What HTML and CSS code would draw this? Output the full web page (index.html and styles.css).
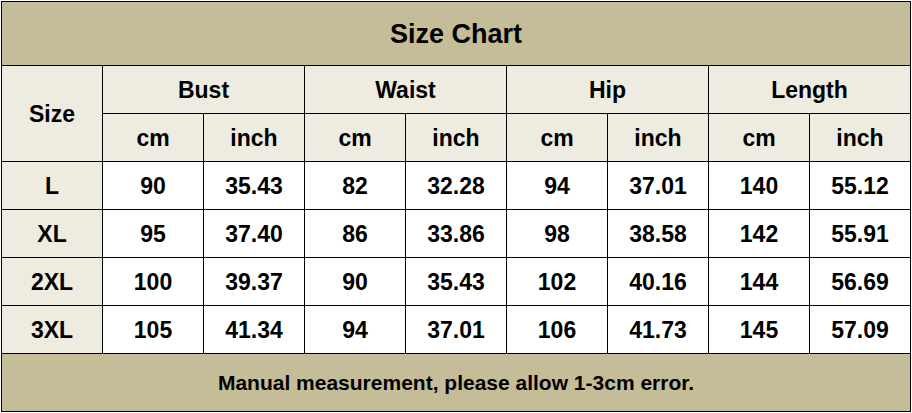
FILE: index.html
```html
<!DOCTYPE html>
<html>
<head>
<meta charset="utf-8">
<link rel="stylesheet" href="styles.css">
</head>
<body>
<table class="chart">
  <colgroup>
    <col class="c"><col class="c"><col class="c"><col class="c"><col class="c"><col class="c"><col class="c"><col class="c"><col class="c">
  </colgroup>
  <tr class="title-row"><td colspan="9" class="title">Size Chart</td></tr>
  <tr class="row"><td rowspan="2" class="head">Size</td><td colspan="2" class="head">Bust</td><td colspan="2" class="head">Waist</td><td colspan="2" class="head">Hip</td><td colspan="2" class="head">Length</td></tr>
  <tr class="row"><td class="head">cm</td><td class="head">inch</td><td class="head">cm</td><td class="head">inch</td><td class="head">cm</td><td class="head">inch</td><td class="head">cm</td><td class="head">inch</td></tr>
  <tr class="row"><td class="head">L</td><td>90</td><td>35.43</td><td>82</td><td>32.28</td><td>94</td><td>37.01</td><td>140</td><td>55.12</td></tr>
  <tr class="row"><td class="head">XL</td><td>95</td><td>37.40</td><td>86</td><td>33.86</td><td>98</td><td>38.58</td><td>142</td><td>55.91</td></tr>
  <tr class="row"><td class="head">2XL</td><td>100</td><td>39.37</td><td>90</td><td>35.43</td><td>102</td><td>40.16</td><td>144</td><td>56.69</td></tr>
  <tr class="row"><td class="head">3XL</td><td>105</td><td>41.34</td><td>94</td><td>37.01</td><td>106</td><td>41.73</td><td>145</td><td>57.09</td></tr>
  <tr class="foot-row"><td colspan="9" class="foot">Manual measurement, please allow 1-3cm error.</td></tr>
</table>
</body>
</html>
```
FILE: styles.css
```css
html, body {
  margin: 0;
  padding: 0;
  background: #ffffff;
}
body {
  font-family: "Liberation Sans", Arial, sans-serif;
  font-weight: bold;
  color: #000;
}
.chart {
  border-collapse: collapse;
  table-layout: fixed;
  width: 910px;
  margin: 1px 0 0 1px;
}
.c { width: 101px; }
.chart td {
  border: 1px solid #000;
  padding: 2px 0 0 0;
  text-align: center;
  vertical-align: middle;
  font-size: 23px;
  background: #ffffff;
  line-height: 1;
}
.chart td.head { background: #eeece1; }
.title-row { height: 64px; }
.row { height: 48px; }
.foot-row { height: 58px; }
.chart td.title {
  background: #c4bd97;
  font-size: 27px;
}
.chart td.foot {
  background: #c4bd97;
  font-size: 21px;
  padding: 0;
}
```
